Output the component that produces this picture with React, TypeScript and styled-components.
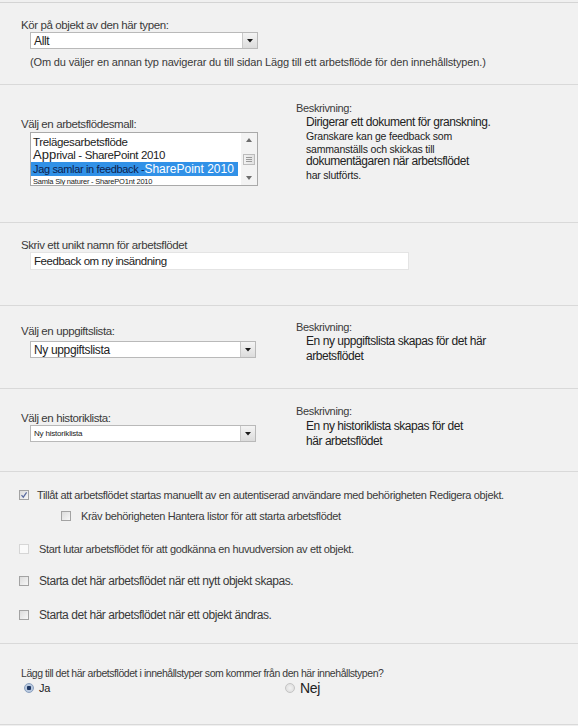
import styled, { createGlobalStyle } from "styled-components";

const GlobalStyle = createGlobalStyle`
  html, body {
    margin: 0;
    padding: 0;
    background: #f0f0f0;
  }
  body {
    font-family: "Liberation Sans", Arial, sans-serif;
    color: #3a3a3a;
  }
`;

const Page = styled.div`
  width: 578px;
  margin-top: 2px;
  border-top: 1px solid #d4d4d4;
  background: #f1f1f1;
`;

const Section = styled.section<{ $h: number; $pad?: number }>`
  height: ${(p) => p.$h}px;
  box-sizing: border-box;
  border-bottom: 1px solid #d9d9d9;
  display: grid;
  grid-template-columns: 275px 1fr;
  padding-left: ${(p) => (p.$pad ?? 21)}px;
`;

const Stack = styled.div<{ $top: number }>`
  padding-top: ${(p) => p.$top}px;
  display: flex;
  flex-direction: column;
  align-items: flex-start;
`;

const Wide = styled.div<{ $top: number }>`
  grid-column: 1 / -1;
  padding-top: ${(p) => p.$top}px;
  display: flex;
  flex-direction: column;
  align-items: flex-start;
`;

const Label = styled.div<{ $mb?: number; $small?: boolean }>`
  font-size: ${(p) => (p.$small ? 10.5 : 11.5)}px;
  line-height: 14px;
  letter-spacing: ${(p) => (p.$small ? -0.45 : -0.4)}px;
  color: #3a3a3a;
  margin-bottom: ${(p) => p.$mb ?? 0}px;
  white-space: nowrap;
`;

const Hint = styled.div`
  margin: 6px 0 0 9px;
  font-size: 11px;
  line-height: 14px;
  letter-spacing: -0.15px;
  color: #3a3a3a;
  white-space: nowrap;
`;

/* dropdown */
const Select = styled.div<{ $w: number; $size?: number }>`
  margin-left: 9px;
  width: ${(p) => p.$w}px;
  height: 17px;
  box-sizing: border-box;
  background: #fff;
  border: 1px solid #b9b9b9;
  display: flex;
  align-items: center;
  justify-content: space-between;
  font-size: ${(p) => p.$size ?? 12}px;
  letter-spacing: ${(p) => ((p.$size ?? 12) < 10 ? -0.2 : -0.35)}px;
  color: #222;
  padding-left: 3px;
`;

const DropButton = styled.div`
  width: 15px;
  height: 15px;
  box-sizing: border-box;
  border-left: 1px solid #c9c9c9;
  background: linear-gradient(#f4f4f4, #dcdcdc);
  display: flex;
  align-items: center;
  justify-content: center;
`;

const Arrow = () => (
  <svg width="6" height="4" viewBox="0 0 6 4">
    <path d="M0 0h6L3 3.5z" fill="#1b1b1b" />
  </svg>
);

/* list box */
const ListBox = styled.div`
  margin: 1px 0 0 9px;
  width: 228px;
  height: 54px;
  box-sizing: border-box;
  background: #fff;
  border: 1px solid #a9a9a9;
  display: flex;
`;

const ListItems = styled.div`
  flex: 1;
  display: flex;
  flex-direction: column;
  padding-top: 3px;
  overflow: hidden;
`;

const Item = styled.div<{ $size: number; $lh: number; $selected?: boolean }>`
  font-size: ${(p) => p.$size}px;
  line-height: ${(p) => p.$lh}px;
  letter-spacing: ${(p) => (p.$size < 10 ? -0.2 : -0.35)}px;
  white-space: nowrap;
  padding-left: 2px;
  color: ${(p) => (p.$selected ? "#0e1f4d" : "#222")};
  background: ${(p) => (p.$selected ? "#3191e7" : "transparent")};
  margin-right: ${(p) => (p.$selected ? 3 : 0)}px;
`;

const Big = styled.span<{ $color?: string; $size?: number }>`
  font-size: ${(p) => p.$size ?? 13}px;
  color: ${(p) => p.$color ?? "inherit"};
  letter-spacing: 0;
`;

const Scrollbar = styled.div`
  width: 16px;
  background: #f3f3f3;
  display: flex;
  flex-direction: column;
  align-items: center;
  justify-content: space-between;
  padding: 5px 0 5px;
  box-sizing: border-box;
`;

const Thumb = styled.div`
  width: 12px;
  height: 11px;
  box-sizing: border-box;
  border: 1px solid #bcbcbc;
  background: linear-gradient(90deg, #f2f2f2, #e2e2e2);
  display: flex;
  align-items: center;
  justify-content: center;
`;

/* text input */
const TextInput = styled.div`
  margin: 0 0 0 9px;
  width: 379px;
  height: 18px;
  box-sizing: border-box;
  background: #fff;
  border: 1px solid #e4e4e4;
  font-size: 11.5px;
  line-height: 16px;
  letter-spacing: -0.45px;
  padding-left: 3px;
  color: #222;
  white-space: nowrap;
`;

/* description column */
const DescTitle = styled.div`
  font-size: 11px;
  line-height: 14px;
  letter-spacing: -0.35px;
  color: #3a3a3a;
`;

const DescLine = styled.div<{ $big?: boolean; $lh: number }>`
  margin-left: 10px;
  font-size: ${(p) => (p.$big ? 12 : 10.5)}px;
  line-height: ${(p) => p.$lh}px;
  letter-spacing: ${(p) => (p.$big ? -0.45 : -0.2)}px;
  color: #222;
  white-space: nowrap;
`;

/* check boxes */
const CheckRow = styled.div<{ $mt: number; $indent: number; $gap: number; $size?: number }>`
  margin-top: ${(p) => p.$mt}px;
  padding-left: ${(p) => p.$indent}px;
  height: 14px;
  display: flex;
  align-items: center;
  gap: ${(p) => p.$gap}px;
  font-size: ${(p) => p.$size ?? 11}px;
  letter-spacing: ${(p) => ((p.$size ?? 11) > 11 ? -0.45 : -0.35)}px;
  color: #3a3a3a;
  white-space: nowrap;
`;

const Box = styled.span<{ $faint?: boolean }>`
  width: 10px;
  height: 10px;
  box-sizing: border-box;
  flex: none;
  border: 1px solid ${(p) => (p.$faint ? "#d6d6d6" : "#a3a3a3")};
  background: ${(p) =>
    p.$faint ? "#fafafa" : "linear-gradient(135deg, #dcdcdc, #f7f7f7)"};
  display: flex;
  align-items: center;
  justify-content: center;
`;

const Check = () => (
  <svg width="8" height="8" viewBox="0 0 8 8">
    <path d="M1.5 4.2l1.8 2L6.6 1.4" fill="none" stroke="#5a6ba0" strokeWidth="1.2" />
  </svg>
);

const CheckBox = ({ checked, faint }: { checked?: boolean; faint?: boolean }) => (
  <Box $faint={faint}>{checked && <Check />}</Box>
);

/* radios */
const RadioRow = styled.div`
  display: flex;
  height: 16px;
  align-items: center;
  padding-left: 3px;
`;

const RadioOption = styled.label<{ $w?: number; $size: number }>`
  width: ${(p) => (p.$w ? `${p.$w}px` : "auto")};
  display: flex;
  align-items: center;
  gap: 5px;
  font-size: ${(p) => p.$size}px;
  letter-spacing: -0.3px;
  color: #222;
`;

const Circle = styled.span<{ $on?: boolean }>`
  width: 10px;
  height: 10px;
  box-sizing: border-box;
  border-radius: 50%;
  border: 1px solid ${(p) => (p.$on ? "#8aa0bf" : "#c4c4c4")};
  background: ${(p) =>
    p.$on
      ? "radial-gradient(circle, #1d3561 0 2px, #b9c9df 2.5px)"
      : "radial-gradient(circle, #f2f2f2, #dadada)"};
`;

export default function App() {
  return (
    <>
      <GlobalStyle />
      <Page>
        <Section $h={82}>
          <Wide $top={15}>
            <Label>Kör på objekt av den här typen:</Label>
            <Select $w={228}>
              Allt
              <DropButton>
                <Arrow />
              </DropButton>
            </Select>
            <Hint>
              (Om du väljer en annan typ navigerar du till sidan Lägg till ett arbetsflöde för den innehållstypen.)
            </Hint>
          </Wide>
        </Section>

        <Section $h={138}>
          <Stack $top={32}>
            <Label>Välj en arbetsflödesmall:</Label>
            <ListBox>
              <ListItems>
                <Item $size={11.5} $lh={12}>Trelägesarbetsflöde</Item>
                <Item $size={11.5} $lh={13}>
                  <Big>App</Big>rival - SharePoint 2010
                </Item>
                <Item $size={11} $lh={14} $selected>
                  Jag samlar in feedback -<Big $color="#fff" $size={12}>SharePoint 2010</Big>
                </Item>
                <Item $size={7.5} $lh={11}>Samla Sly naturer - SharePO1nt 2010</Item>
              </ListItems>
              <Scrollbar>
                <svg width="6" height="4" viewBox="0 0 6 4">
                  <path d="M0 4h6L3 0z" fill="#6d6d6d" />
                </svg>
                <Thumb>
                  <svg width="6" height="5" viewBox="0 0 6 5">
                    <path d="M0 .5h6M0 2.5h6M0 4.5h6" stroke="#9a9a9a" strokeWidth="1" />
                  </svg>
                </Thumb>
                <svg width="6" height="4" viewBox="0 0 6 4">
                  <path d="M0 0h6L3 4z" fill="#6d6d6d" />
                </svg>
              </Scrollbar>
            </ListBox>
          </Stack>
          <Stack $top={16}>
            <DescTitle>Beskrivning:</DescTitle>
            <DescLine $big $lh={14}>Dirigerar ett dokument för granskning.</DescLine>
            <DescLine $lh={14}>Granskare kan ge feedback som</DescLine>
            <DescLine $lh={12}>sammanställs och skickas till</DescLine>
            <DescLine $big $lh={12}>dokumentägaren när arbetsflödet</DescLine>
            <DescLine $lh={16}>har slutförts.</DescLine>
          </Stack>
        </Section>

        <Section $h={83}>
          <Wide $top={15}>
            <Label>Skriv ett unikt namn för arbetsflödet</Label>
            <TextInput>Feedback om ny insändning</TextInput>
          </Wide>
        </Section>

        <Section $h={83}>
          <Stack $top={18}>
            <Label $mb={3}>Välj en uppgiftslista:</Label>
            <Select $w={226}>
              Ny uppgiftslista
              <DropButton>
                <Arrow />
              </DropButton>
            </Select>
          </Stack>
          <Stack $top={14}>
            <DescTitle>Beskrivning:</DescTitle>
            <DescLine $big $lh={14}>En ny uppgiftslista skapas för det här</DescLine>
            <DescLine $big $lh={16}>arbetsflödet</DescLine>
          </Stack>
        </Section>

        <Section $h={83}>
          <Stack $top={22}>
            <Label $mb={0}>Välj en historiklista:</Label>
            <Select $w={226} $size={8}>
              Ny historiklista
              <DropButton>
                <Arrow />
              </DropButton>
            </Select>
          </Stack>
          <Stack $top={15}>
            <DescTitle>Beskrivning:</DescTitle>
            <DescLine $big $lh={16}>En ny historiklista skapas för det</DescLine>
            <DescLine $big $lh={14}>här arbetsflödet</DescLine>
          </Stack>
        </Section>

        <Section $h={172} $pad={0}>
          <Wide $top={16}>
            <CheckRow $mt={0} $indent={19} $gap={8}>
              <CheckBox checked />
              Tillåt att arbetsflödet startas manuellt av en autentiserad användare med behörigheten Redigera objekt.
            </CheckRow>
            <CheckRow $mt={7} $indent={61} $gap={10}>
              <CheckBox />
              Kräv behörigheten Hantera listor för att starta arbetsflödet
            </CheckRow>
            <CheckRow $mt={19} $indent={19} $gap={10}>
              <CheckBox faint />
              Start lutar arbetsflödet för att godkänna en huvudversion av ett objekt.
            </CheckRow>
            <CheckRow $mt={18} $indent={19} $gap={10} $size={12}>
              <CheckBox />
              Starta det här arbetsflödet när ett nytt objekt skapas.
            </CheckRow>
            <CheckRow $mt={20} $indent={19} $gap={10} $size={12}>
              <CheckBox />
              Starta det här arbetsflödet när ett objekt ändras.
            </CheckRow>
          </Wide>
        </Section>

        <Section $h={81}>
          <Wide $top={22}>
            <Label $small>
              Lägg till det här arbetsflödet i innehållstyper som kommer från den här innehållstypen?
            </Label>
            <RadioRow>
              <RadioOption $w={261} $size={11}>
                <Circle $on />
                Ja
              </RadioOption>
              <RadioOption $size={14}>
                <Circle />
                Nej
              </RadioOption>
            </RadioRow>
          </Wide>
        </Section>
      </Page>
    </>
  );
}
